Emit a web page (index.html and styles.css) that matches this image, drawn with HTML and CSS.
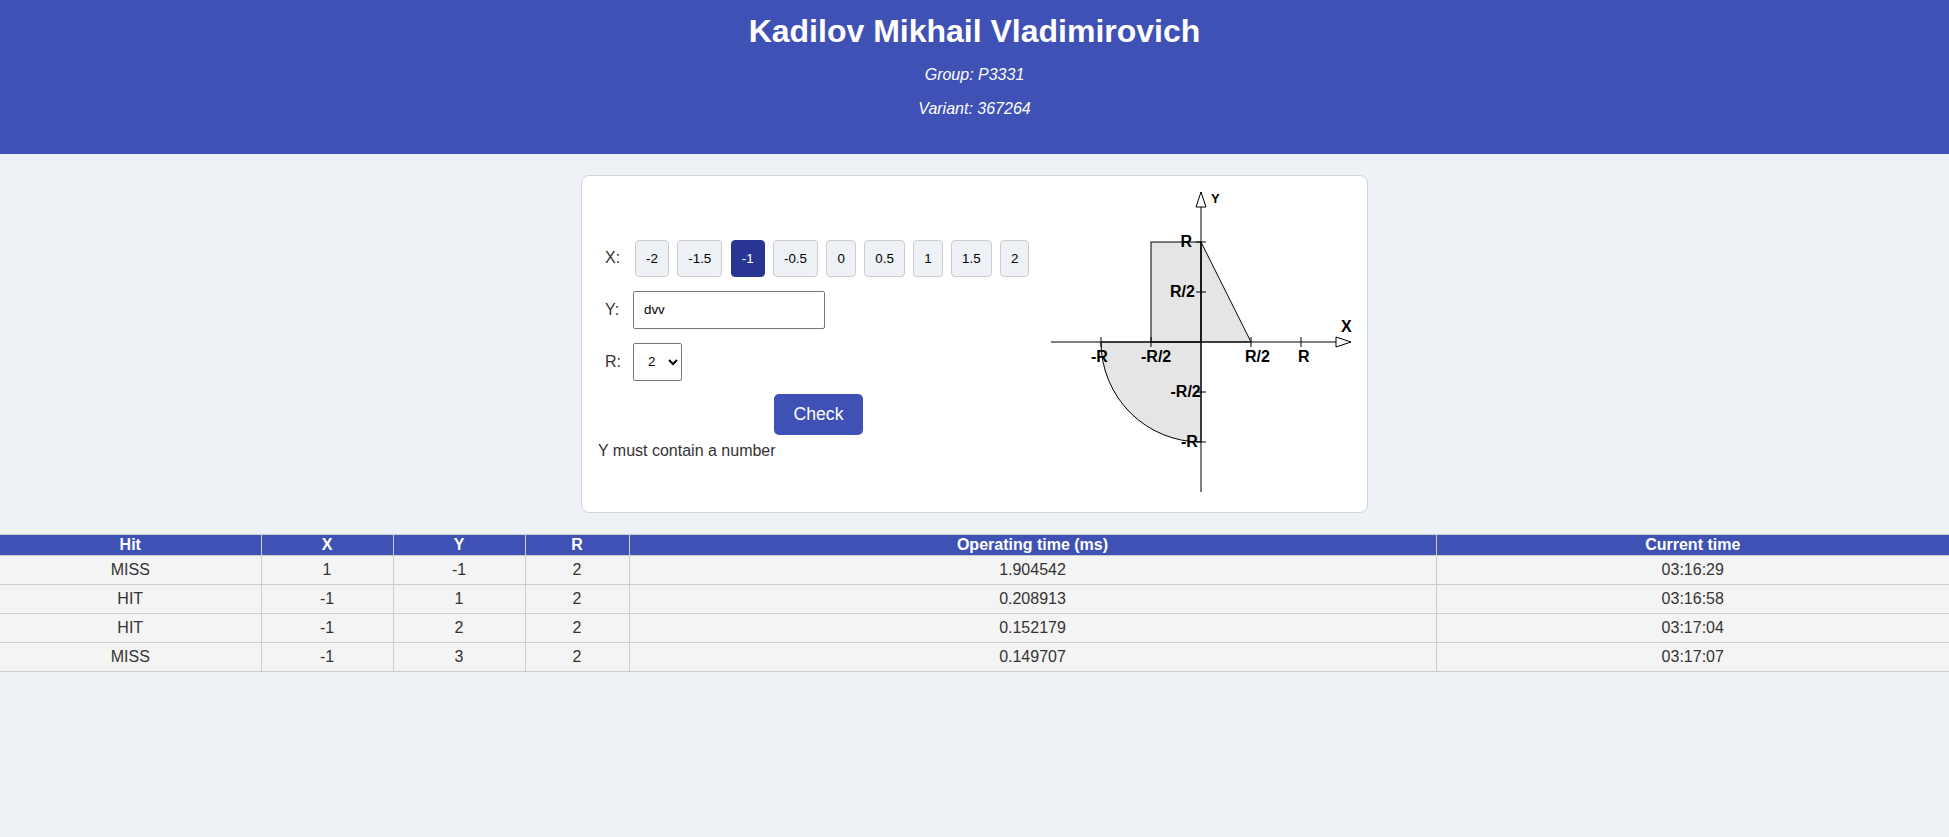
FILE: index.html
```html
<!DOCTYPE html>
<html lang="en">
<head>
<meta charset="utf-8">
<title>Web Lab</title>
<link rel="stylesheet" href="styles.css">
</head>
<body>
<header class="site-header">
  <h1 class="title">Kadilov Mikhail Vladimirovich</h1>
  <p class="meta">Group: P3331</p>
  <p class="meta">Variant: 367264</p>
</header>
<main class="main">
  <section class="card">
    <form class="form">
      <div class="row row-x">
        <span class="label">X:</span>
        <div class="x-buttons">
          <button type="button" class="x-btn">-2</button>
          <button type="button" class="x-btn">-1.5</button>
          <button type="button" class="x-btn is-active">-1</button>
          <button type="button" class="x-btn">-0.5</button>
          <button type="button" class="x-btn">0</button>
          <button type="button" class="x-btn">0.5</button>
          <button type="button" class="x-btn">1</button>
          <button type="button" class="x-btn">1.5</button>
          <button type="button" class="x-btn">2</button>
        </div>
      </div>
      <div class="row row-y">
        <label class="label" for="y-input">Y:</label>
        <input id="y-input" class="text-input" type="text" value="dvv">
      </div>
      <div class="row row-r">
        <label class="label" for="r-select">R:</label>
        <select id="r-select" class="select">
          <option>1</option>
          <option selected>2</option>
          <option>3</option>
          <option>4</option>
          <option>5</option>
        </select>
      </div>
      <div class="actions"><button type="button" class="check-btn">Check</button></div>
      <div class="message">Y must contain a number</div>
    </form>
    <div class="graph">
      <svg class="plot" width="300" height="300" viewBox="0 0 300 300">
        <line class="axis" x1="0" y1="150" x2="300" y2="150"/>
        <line class="axis" x1="150" y1="0" x2="150" y2="300"/>
        <rect class="area" x="100" y="50" width="50" height="100"/>
        <polygon class="area" points="150,50 200,150 150,150"/>
        <path class="area" d="M150,150 L50,150 A100,100 0 0,0 150,250 Z"/>
        <polygon class="arrow" points="285,145 300,150 285,155"/>
        <polygon class="arrow" points="145,15 150,0 155,15"/>
        <line class="axis" x1="50" y1="145" x2="50" y2="155"/>
        <line class="axis" x1="100" y1="145" x2="100" y2="155"/>
        <line class="axis" x1="200" y1="145" x2="200" y2="155"/>
        <line class="axis" x1="250" y1="145" x2="250" y2="155"/>
        <line class="axis" x1="145" y1="50" x2="155" y2="50"/>
        <line class="axis" x1="145" y1="100" x2="155" y2="100"/>
        <line class="axis" x1="145" y1="200" x2="155" y2="200"/>
        <line class="axis" x1="145" y1="250" x2="155" y2="250"/>
        <text class="lbl" x="40" y="170">-R</text>
        <text class="lbl" x="90" y="170">-R/2</text>
        <text class="lbl" x="194" y="170">R/2</text>
        <text class="lbl" x="247" y="170">R</text>
        <text class="lbl" x="129.5" y="55">R</text>
        <text class="lbl" x="119" y="105">R/2</text>
        <text class="lbl" x="119.5" y="205">-R/2</text>
        <text class="lbl" x="130" y="255">-R</text>
        <text class="lbl" x="290" y="140">X</text>
        <text class="lbl lbl-small" x="160" y="11">Y</text>
      </svg>
    </div>
  </section>
  <table class="results">
    <colgroup>
      <col class="c-hit">
      <col class="c-x">
      <col class="c-y">
      <col class="c-r">
      <col class="c-op">
      <col class="c-cur">
    </colgroup>
    <thead>
      <tr><th>Hit</th><th>X</th><th>Y</th><th>R</th><th>Operating time (ms)</th><th>Current time</th></tr>
    </thead>
    <tbody>
      <tr><td>MISS</td><td>1</td><td>-1</td><td>2</td><td>1.904542</td><td>03:16:29</td></tr>
      <tr><td>HIT</td><td>-1</td><td>1</td><td>2</td><td>0.208913</td><td>03:16:58</td></tr>
      <tr><td>HIT</td><td>-1</td><td>2</td><td>2</td><td>0.152179</td><td>03:17:04</td></tr>
      <tr><td>MISS</td><td>-1</td><td>3</td><td>2</td><td>0.149707</td><td>03:17:07</td></tr>
    </tbody>
  </table>
</main>
</body>
</html>
```

FILE: styles.css
```css
html, body {
  margin: 0;
  padding: 0;
}

body {
  background: #eef1f6;
  font-family: "Liberation Sans", Arial, sans-serif;
  font-size: 16px;
  color: #333;
}

.site-header {
  background: #3f51b5;
  color: #fff;
  text-align: center;
  padding: 13px 0 20px;
}

.title {
  margin: 0;
  font-size: 32px;
  font-weight: bold;
}

.meta {
  margin: 16px 0;
  font-style: italic;
  font-size: 16px;
}

.main {
  padding-top: 21px;
}

.card {
  display: flex;
  gap: 12px;
  width: fit-content;
  margin: 0 auto 21px;
  padding: 16px;
  background: #fff;
  border: 1px solid #d0d3d8;
  border-radius: 8px;
}

.form {
  width: 441px;
  padding-top: 47.5px;
  box-sizing: border-box;
}

.row {
  display: flex;
  align-items: center;
  padding-left: 7px;
}

.row-x {
  margin-bottom: 14px;
}

.row-y {
  margin-bottom: 14px;
}

.row-r {
  margin-bottom: 13px;
}

.label {
  width: 28px;
  flex: none;
  font-size: 16px;
  color: #333;
}

.x-buttons {
  display: flex;
  gap: 8.45px;
  margin-left: 2px;
}

.x-btn {
  font-family: "Liberation Sans", Arial, sans-serif;
  font-size: 13.333px;
  line-height: normal;
  padding: 10px;
  border: 1px solid #ccc;
  border-radius: 4px;
  background: #eef1f6;
  color: #000;
}

.x-btn.is-active {
  background: #283593;
  border-color: #283593;
  color: #fff;
}

.text-input {
  box-sizing: border-box;
  width: 192px;
  height: 38px;
  padding: 0 10px;
  border: 1px solid #767676;
  border-radius: 2px;
  font-family: "Liberation Sans", Arial, sans-serif;
  font-size: 13.333px;
  color: #000;
  background: #fff;
}

.select {
  box-sizing: border-box;
  width: 49px;
  height: 38px;
  padding: 0 4px 0 10px;
  border: 1px solid #767676;
  border-radius: 2px;
  font-family: "Liberation Sans", Arial, sans-serif;
  font-size: 13.333px;
  color: #000;
  background: #fff;
}

.actions {
  text-align: center;
}

.check-btn {
  font-family: "Liberation Sans", Arial, sans-serif;
  font-size: 17.6px;
  line-height: normal;
  padding: 10px 20px;
  border: none;
  border-radius: 5px;
  background: #3f51b5;
  color: #fff;
}

.message {
  margin-top: 7px;
  font-size: 16px;
  color: #333;
}

.plot {
  overflow: visible;
}

.plot .axis {
  stroke: #000;
  stroke-width: 1;
}

.plot .area {
  fill: #000;
  fill-opacity: 0.1;
  stroke: #000;
  stroke-width: 1;
}

.plot .arrow {
  fill: #fff;
  stroke: #000;
  stroke-width: 1;
}

.plot .lbl {
  font-family: "Liberation Sans", Arial, sans-serif;
  font-size: 16px;
  font-weight: bold;
  fill: #000;
}

.plot .lbl-small {
  font-size: 13px;
}

.results {
  width: 100%;
  border-collapse: collapse;
  table-layout: fixed;
}

.c-hit { width: 261px; }
.c-x { width: 132px; }
.c-y { width: 132px; }
.c-r { width: 104px; }
.c-op { width: 807px; }

.results th {
  background: #3f51b5;
  color: #fff;
  font-weight: bold;
  font-size: 16px;
  line-height: 18px;
  padding: 1px;
  border: 1px solid #ccc;
}

.results td {
  background: #f4f4f4;
  font-size: 16px;
  line-height: 18px;
  padding: 5px;
  border: 1px solid #ccc;
  text-align: center;
  color: #333;
}

.results th:first-child,
.results td:first-child {
  border-left: none;
}

.results th:last-child,
.results td:last-child {
  border-right: none;
}
```
